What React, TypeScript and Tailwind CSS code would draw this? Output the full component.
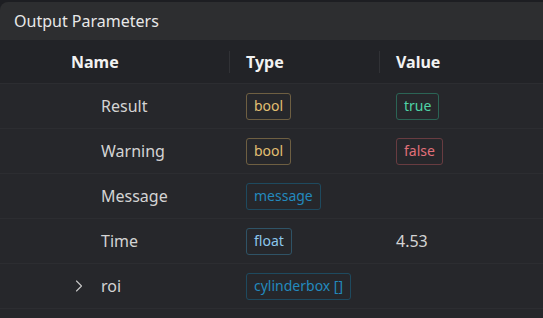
import { ChevronRight } from "lucide-react";

type Tone = "yellow" | "green" | "red" | "blue" | "sky";

const toneClass: Record<Tone, string> = {
  yellow: "border-[#6e5f42] text-[#e2bf72]",
  green: "border-[#2b6455] text-[#4fd3a6]",
  red: "border-[#683c41] text-[#e0707a]",
  blue: "border-[#1e4a5f] text-[#2389bd]",
  sky: "border-[#2f5366] text-[#8cc6ec]",
};

function Badge({ label, tone }: { label: string; tone: Tone }) {
  return (
    <span className={`inline-flex items-center h-[27px] px-[7px] rounded-[3px] border text-[14px] leading-none ${toneClass[tone]}`}>
      {label}
    </span>
  );
}

interface Param {
  name: string;
  type: string;
  typeTone: Tone;
  value?: { label: string; tone?: Tone };
  expandable?: boolean;
}

const params: Param[] = [
  { name: "Result", type: "bool", typeTone: "yellow", value: { label: "true", tone: "green" } },
  { name: "Warning", type: "bool", typeTone: "yellow", value: { label: "false", tone: "red" } },
  { name: "Message", type: "message", typeTone: "blue" },
  { name: "Time", type: "float", typeTone: "sky", value: { label: "4.53" } },
  { name: "roi", type: "cylinderbox []", typeTone: "blue", expandable: true },
];

export default function App() {
  return (
    <div
      className="w-[543px] h-[318px] overflow-hidden bg-[#1d1e22] pt-[2px] text-[#d6d6d6]"
      style={{ fontFamily: '"Segoe UI", "Noto Sans", "Open Sans", sans-serif' }}
    >
      {/* Panel title */}
      <div className="h-[38px] bg-[#2d2e30] rounded-tl-[8px] flex items-center pl-[14px] text-[16px] text-[#e8e8e8]">
        Output Parameters
      </div>

      <div className="bg-[#26272b] h-full">
        {/* Column header */}
        <div className="h-[44px] bg-[#222327] border-b border-[#2c2d31] grid grid-cols-[229px_150px_1fr] items-center font-bold text-[16px] text-[#f2f2f2]">
          <div className="pl-[71px]">Name</div>
          <div className="flex items-center h-full">
            <span className="w-px h-[22px] bg-[#313236]" />
            <span className="pl-[16px]">Type</span>
          </div>
          <div className="flex items-center h-full">
            <span className="w-px h-[22px] bg-[#313236]" />
            <span className="pl-[16px]">Value</span>
          </div>
        </div>

        {params.map((p) => (
          <div
            key={p.name}
            className="h-[45px] border-b border-[#2c2d31] grid grid-cols-[246px_150px_1fr] items-center text-[16px]"
          >
            <div className="flex items-center">
              <span className="w-[101px] flex justify-end pr-[12px]">
                {p.expandable && <ChevronRight className="w-[20px] h-[20px] text-[#c8c8c8]" strokeWidth={1.3} />}
              </span>
              <span className="text-[#d4d4d4]">{p.name}</span>
            </div>
            <div>
              <Badge label={p.type} tone={p.typeTone} />
            </div>
            <div>
              {p.value &&
                (p.value.tone ? (
                  <Badge label={p.value.label} tone={p.value.tone} />
                ) : (
                  <span className="text-[#d4d4d4] text-[16px]">{p.value.label}</span>
                ))}
            </div>
          </div>
        ))}
      </div>
    </div>
  );
}
